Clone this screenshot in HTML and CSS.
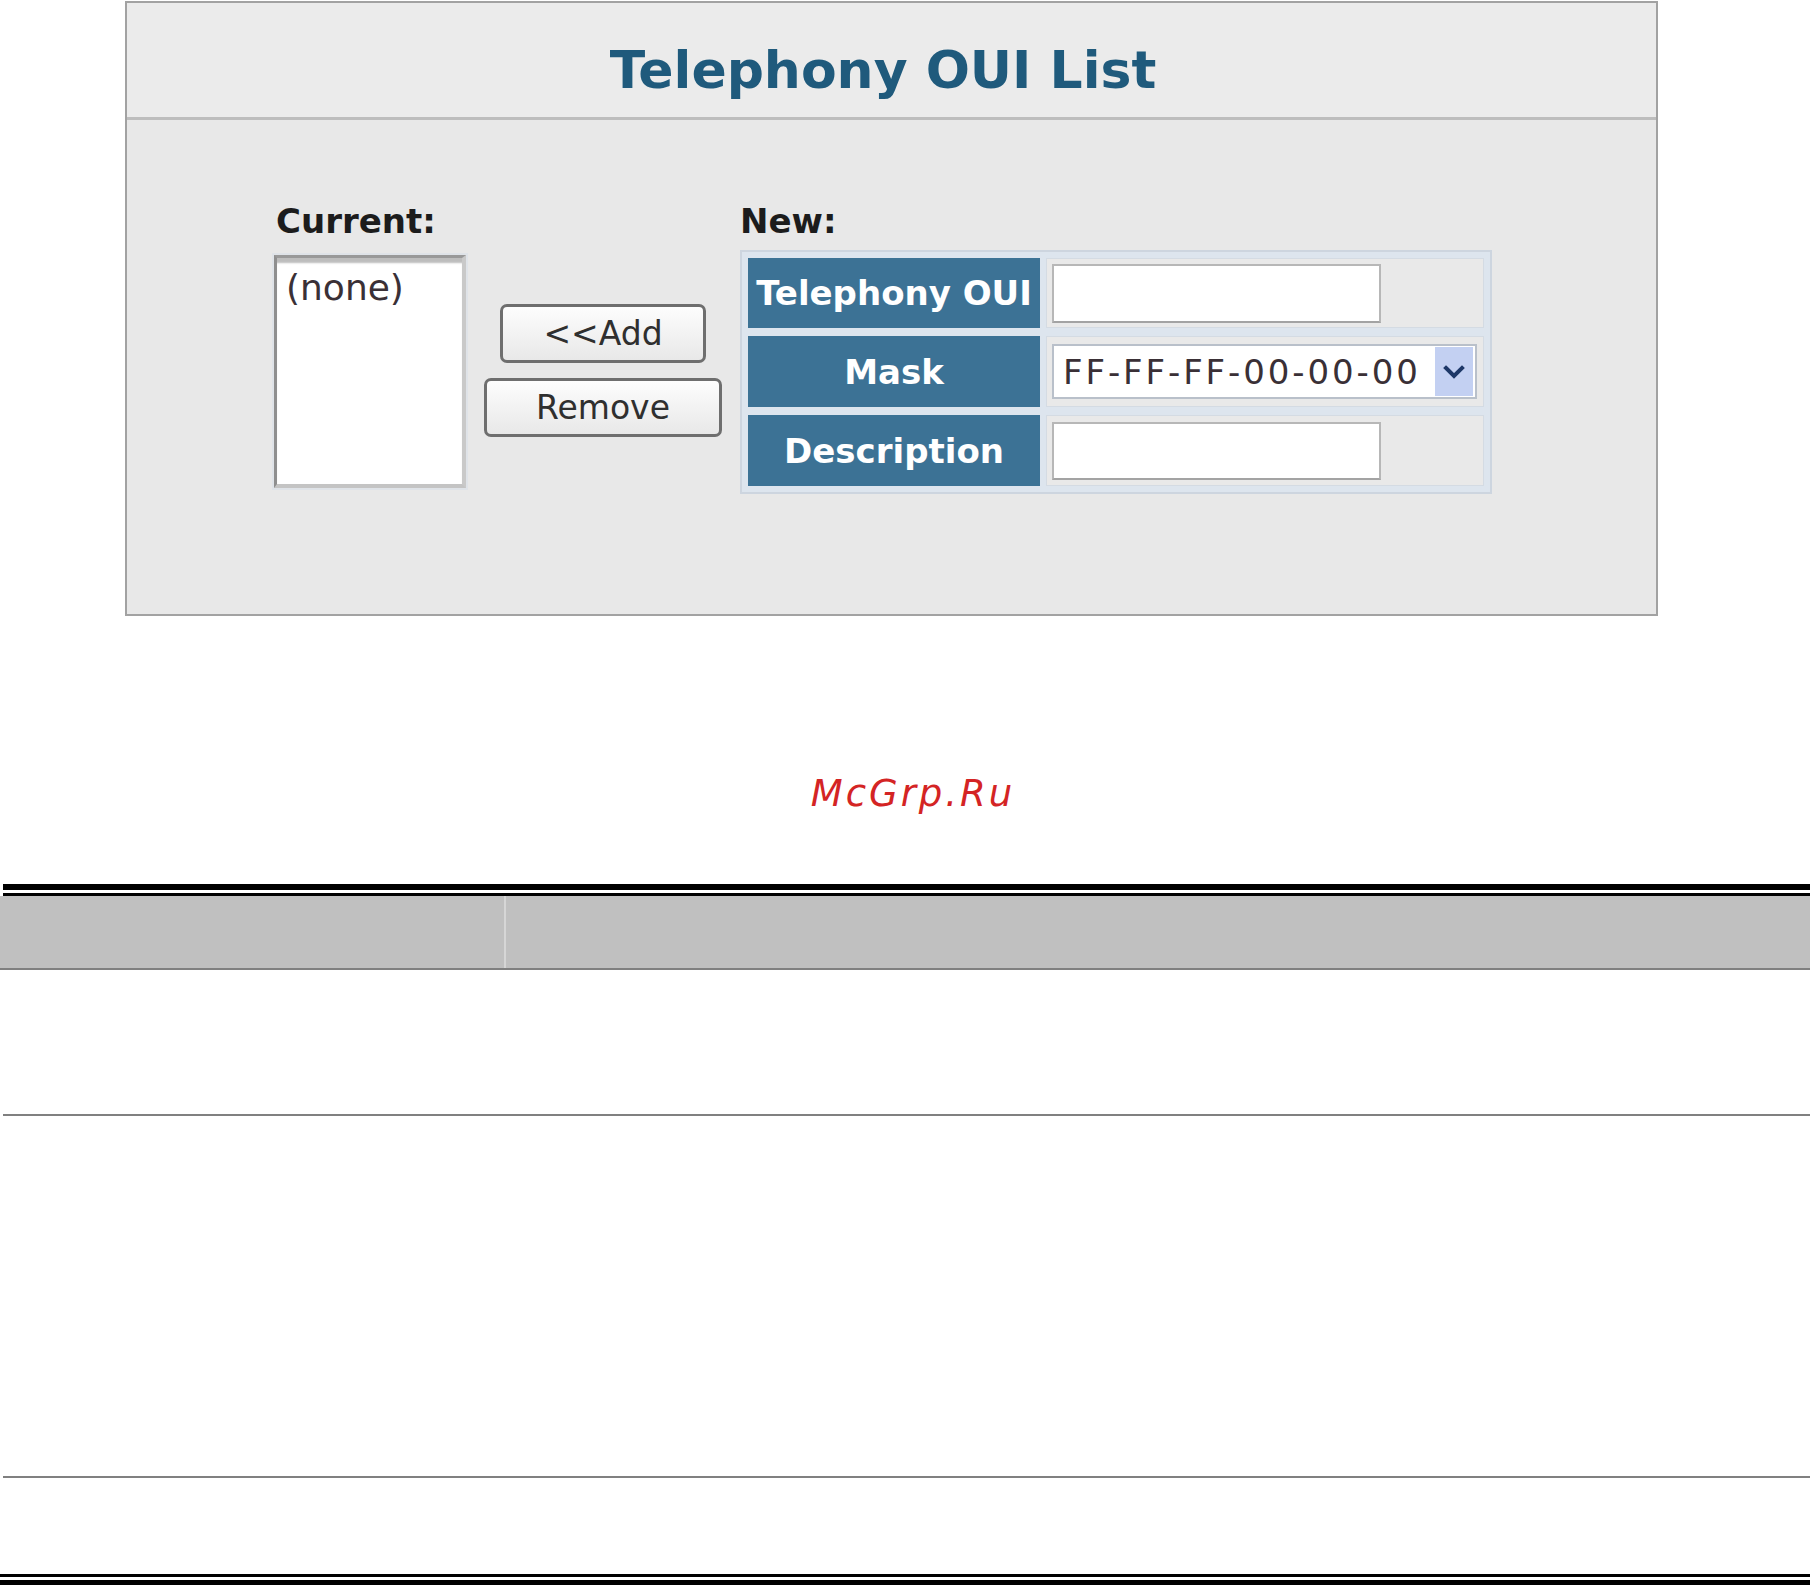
FILE: index.html
```html
<!DOCTYPE html>
<html>
<head>
<meta charset="utf-8">
<title>Telephony OUI List</title>
<link rel="stylesheet" href="styles.css">
</head>
<body>
<div class="panel">
  <div class="panel-head"><h1 class="title">Telephony OUI List</h1></div>
  <div class="panel-body">
    <div class="col-current">
      <div class="label label-current">Current:</div>
      <div class="listbox"><div class="option">(none)</div></div>
    </div>
    <div class="col-actions">
      <button class="btn btn-add">&lt;&lt;Add</button>
      <button class="btn btn-remove">Remove</button>
    </div>
    <div class="col-new">
      <div class="label">New:</div>
      <div class="form-grid">
        <div class="cell-label">Telephony OUI</div>
        <div class="cell-value"><div class="textbox"></div></div>
        <div class="cell-label">Mask</div>
        <div class="cell-value">
          <div class="select">
            <span class="select-text">FF-FF-FF-00-00-00</span>
            <span class="select-arrow"><svg class="chevron" width="22" height="14" viewBox="0 0 22 14"><path d="M3 3 L11 11 L19 3" fill="none" stroke="#1d3768" stroke-width="4" stroke-linecap="square"/></svg></span>
          </div>
        </div>
        <div class="cell-label">Description</div>
        <div class="cell-value"><div class="textbox textbox-desc"></div></div>
      </div>
    </div>
  </div>
</div>
<div class="watermark">McGrp.Ru</div>
<div class="doc-table">
  <div class="rule-top"></div>
  <div class="thead"><div class="th th-1"></div><div class="th th-2"></div></div>
  <div class="row row-1"></div>
  <div class="row row-2"></div>
  <div class="row row-3"></div>
  <div class="rule-bottom"></div>
</div>
</body>
</html>
```
FILE: styles.css
```css
* { box-sizing: border-box; }
html, body { margin: 0; padding: 0; background: #fff; }
body { font-family: "DejaVu Sans", Verdana, sans-serif; }

.panel {
  margin: 1px 0 0 125px;
  width: 1533px;
  height: 615px;
  border: 2px solid #a2a2a2;
  background: #e8e8e8;
}
.panel-head {
  height: 117px;
  padding-top: 37px;
  background: #ebebeb;
  border-bottom: 3px solid #bdbdbd;
}
.title {
  margin: 0;
  padding-right: 17px;
  font-size: 52px;
  line-height: 60px;
  font-weight: bold;
  color: #1f5a7c;
  text-align: center;
}
.panel-body {
  display: flex;
  align-items: flex-start;
  padding: 81px 0 0 147px;
}
.label {
  font-size: 34px;
  line-height: 40px;
  font-weight: bold;
  color: #1c1c1c;
}
.label-current { padding-left: 2px; }
.col-current { width: 192px; }
.listbox {
  margin-top: 14px;
  width: 192px;
  height: 233px;
  background: #fff;
  border-style: solid;
  border-width: 3px 4px 4px 3px;
  border-color: #999 #c9c9c9 #c4c4c4 #8f8f8f;
  box-shadow: inset 0 6px 2px -1px #bdbdbd, 0 0 0 2px #dfe3e8;
  padding: 8px 0 0 9px;
}
.option {
  font-size: 36px;
  line-height: 44px;
  color: #3a3036;
}
.col-actions {
  width: 274px;
  padding-top: 103px;
  display: flex;
  flex-direction: column;
  align-items: center;
  gap: 15px;
}
.btn {
  height: 59px;
  padding: 0;
  font-family: "DejaVu Sans", Verdana, sans-serif;
  font-size: 33px;
  line-height: 1;
  color: #2f2f2f;
  border: 3px solid #6e6e6e;
  border-radius: 7px;
  background: linear-gradient(#fdfdfd, #e8e8e8);
}
.btn-add { width: 206px; }
.btn-remove { width: 238px; }

.col-new { width: 752px; }
.form-grid {
  margin-top: 9px;
  display: grid;
  grid-template-columns: 292px 438px;
  grid-template-rows: 70px 71px 71px;
  gap: 8px 6px;
  padding: 6px;
  border: 2px solid #cdd5df;
  background: #dde5ee;
}
.cell-label {
  display: flex;
  align-items: center;
  justify-content: center;
  background: #3c7295;
  color: #fff;
  font-size: 34px;
  font-weight: bold;
  white-space: nowrap;
  overflow: hidden;
}
.cell-value {
  display: flex;
  align-items: center;
  padding-left: 5px;
  background: #e9e9e9;
  border: 1px solid #d4dbe3;
}
.textbox {
  width: 329px;
  height: 59px;
  background: #fff;
  border: 2px solid #b7b7b7;
  border-bottom-color: #a3a3a3;
}
.textbox-desc { height: 58px; }
.select {
  width: 425px;
  height: 55px;
  display: flex;
  align-items: center;
  justify-content: space-between;
  padding: 0 2px 0 9px;
  background: #fff;
  border: 2px solid #b9c0ca;
}
.select-text {
  font-size: 34px;
  letter-spacing: 2.9px;
  color: #3a3036;
  white-space: nowrap;
}
.select-arrow {
  width: 38px;
  height: 49px;
  display: flex;
  align-items: center;
  justify-content: center;
  background: #c3d0f2;
}
.chevron { display: block; }

.watermark {
  margin-top: 157px;
  padding-left: 14px;
  text-align: center;
  font-size: 37px;
  line-height: 42px;
  font-style: italic;
  letter-spacing: 3px;
  color: #d42424;
}

.doc-table { margin: 69px 2px 0 3px; }
.rule-top {
  height: 12px;
  border-top: 6px solid #000;
  border-bottom: 3px solid #000;
}
.thead {
  display: flex;
  height: 74px;
  margin-left: -3px;
  background: #c0c0c0;
  border-bottom: 2px solid #808080;
}
.th-1 { width: 506px; border-right: 2px solid #d6d6d6; }
.th-2 { flex: 1; }
.row { border-bottom: 2px solid #808080; }
.row-1 { height: 146px; }
.row-2 { height: 362px; }
.row-3 { height: 96px; border-bottom: none; }
.rule-bottom {
  height: 12px;
  margin-left: -3px;
  border-top: 3px solid #000;
  border-bottom: 6px solid #000;
}
```
